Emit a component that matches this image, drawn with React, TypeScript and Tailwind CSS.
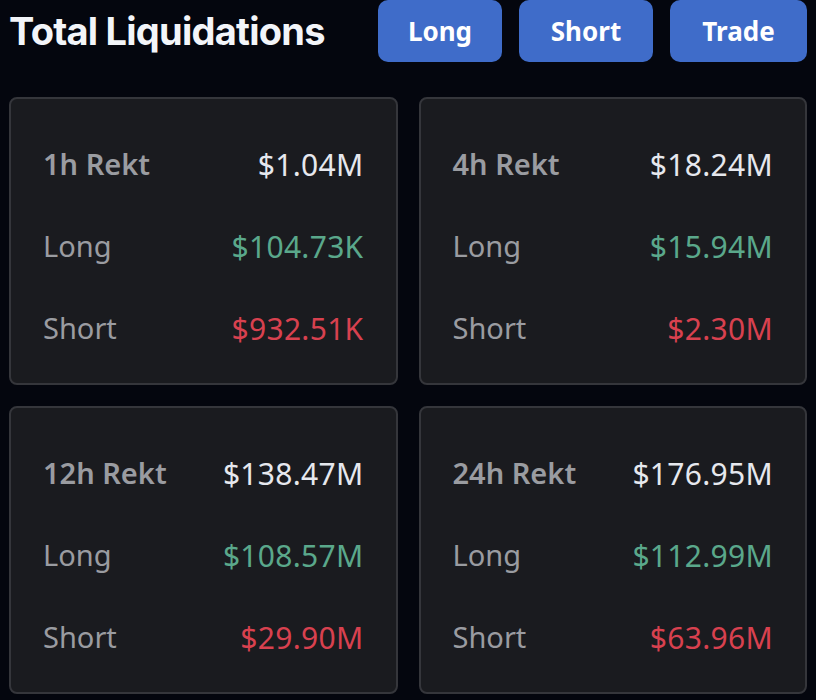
import React from 'react';

type Stat = {
  period: string;
  total: string;
  long: string;
  short: string;
};

const stats: Stat[] = [
  { period: '1h Rekt', total: '$1.04M', long: '$104.73K', short: '$932.51K' },
  { period: '4h Rekt', total: '$18.24M', long: '$15.94M', short: '$2.30M' },
  { period: '12h Rekt', total: '$138.47M', long: '$108.57M', short: '$29.90M' },
  { period: '24h Rekt', total: '$176.95M', long: '$112.99M', short: '$63.96M' },
];

const cardFont = { fontFamily: '"Noto Sans", "Open Sans", sans-serif' };

function StatCard({ stat }: { stat: Stat }) {
  return (
    <div
      className="h-[288px] rounded-[8px] border-2 border-[#35363b] bg-[#1a1b1f] px-[32px] pt-[24px] text-[29px]"
      style={cardFont}
    >
      <div className="flex h-[82px] items-center justify-between">
        <span className="font-semibold text-[#9a9ca1]">{stat.period}</span>
        <span className="text-[30px] tracking-[0.01em] text-[#e6e8ee]">{stat.total}</span>
      </div>
      <div className="flex h-[82px] items-center justify-between">
        <span className="text-[#9a9ca1]">Long</span>
        <span className="text-[30px] tracking-[0.01em] text-[#5aa88b]">{stat.long}</span>
      </div>
      <div className="flex h-[82px] items-center justify-between">
        <span className="text-[#9a9ca1]">Short</span>
        <span className="text-[30px] tracking-[0.01em] text-[#d8414f]">{stat.short}</span>
      </div>
    </div>
  );
}

export default function App() {
  return (
    <div className="h-[700px] w-[816px] overflow-hidden bg-[#04060e] px-[9px]">
      {/* header */}
      <div className="flex h-[62px] items-center justify-between">
        <h1
          className="text-[38px] font-bold tracking-[-0.02em] text-[#f3f5f9]"
          style={{ fontFamily: 'Inter, "Liberation Sans", sans-serif' }}
        >
          Total Liquidations
        </h1>
        <div className="flex h-full gap-[17px]" style={cardFont}>
          <button className="h-full w-[124px] rounded-[10px] bg-[#3f6cc9] text-[26px] font-bold text-white">Long</button>
          <button className="h-full w-[134px] rounded-[10px] bg-[#3f6cc9] text-[26px] font-bold text-white">Short</button>
          <button className="h-full w-[137px] rounded-[10px] bg-[#3f6cc9] text-[26px] font-bold text-white">Trade</button>
        </div>
      </div>

      {/* cards */}
      <div className="mt-[35px] grid grid-cols-2 gap-[21px]">
        {stats.map((s) => (
          <StatCard key={s.period} stat={s} />
        ))}
      </div>
    </div>
  );
}
